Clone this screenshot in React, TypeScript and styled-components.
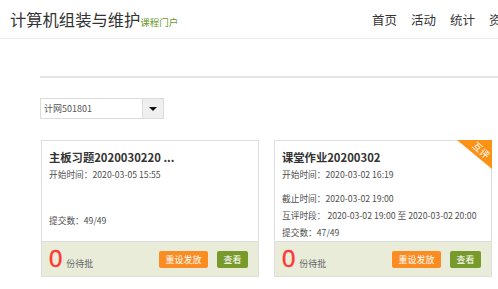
import React from 'react'
import styled, { createGlobalStyle } from 'styled-components'

const GlobalStyle = createGlobalStyle`
  html, body {
    margin: 0;
    padding: 0;
    background: #fff;
    overflow: hidden;
  }
  body {
    font-family: "Noto Sans CJK SC", "Liberation Sans", sans-serif;
    color: #333;
  }
`

const Page = styled.div`
  width: 620px;
`

const Header = styled.header`
  height: 38px;
  display: flex;
  align-items: center;
  padding-left: 10px;
  border-bottom: 1px solid #ececec;
`

const Brand = styled.div`
  flex: 0 0 362px;
  display: flex;
  align-items: baseline;
`

const Title = styled.h1`
  margin: 0;
  font-size: 16.3px;
  font-weight: 400;
  color: #333;
`

const Sub = styled.span`
  font-size: 9.5px;
  color: #6a9a1f;
`

const Nav = styled.nav`
  display: flex;
  gap: 14px;
  font-size: 12.5px;
  color: #333;
`

const Main = styled.main`
  padding: 37px 0 0 40px;
`

const Rule = styled.div`
  height: 2px;
  background: #e4e4e4;
`

const Select = styled.div`
  margin-top: 20px;
  width: 124px;
  height: 21px;
  box-sizing: border-box;
  border: 1px solid #dcdcdc;
  display: flex;
`

const SelectText = styled.div`
  flex: 1;
  font-size: 9px;
  line-height: 19px;
  padding-left: 3px;
  color: #555;
`

const SelectBtn = styled.div`
  width: 20px;
  border-left: 1px solid #dcdcdc;
  background: #efefef;
  display: flex;
  align-items: center;
  justify-content: center;
`

const Caret = styled.div`
  width: 0;
  height: 0;
  border-left: 4px solid transparent;
  border-right: 4px solid transparent;
  border-top: 4px solid #111;
`

const Cards = styled.div`
  margin-top: 21px;
  margin-left: 1px;
  display: grid;
  grid-template-columns: 218px 218px;
  gap: 15px;
`

const Card = styled.div`
  position: relative;
  border: 1px solid #dedede;
`

const Body = styled.div`
  height: 100px;
  box-sizing: border-box;
  padding: 8px 7px 0;
  background: #fff;
  overflow: hidden;
`

const CardTitle = styled.div`
  font-size: 11.3px;
  font-weight: 700;
  line-height: 17px;
  color: #333;
`

const Line = styled.div<{ $gap?: number }>`
  font-size: 8.7px;
  line-height: 17px;
  color: #4f4f4f;
  white-space: nowrap;
  margin-top: ${p => p.$gap || 0}px;
`

const Times = styled.div`
  min-height: 46px;
`

const Footer = styled.div`
  height: 35px;
  box-sizing: border-box;
  border-top: 1px solid #dedede;
  background: #e8ecd9;
  display: flex;
  align-items: center;
  padding: 0 10px 0 7px;
`

const Pending = styled.div`
  display: flex;
  align-items: baseline;
  gap: 4px;
`

const Count = styled.span`
  font-family: "Liberation Sans", sans-serif;
  font-size: 24px;
  line-height: 1;
  color: #ff3633;
  -webkit-text-stroke: 0.4px #ff3633;
`

const PendingLabel = styled.span`
  font-size: 9px;
  color: #666;
`

const Actions = styled.div`
  margin-left: auto;
  display: flex;
  gap: 9px;
`

const Button = styled.button<{ $tone: 'orange' | 'green' }>`
  height: 17px;
  padding: 0 6.5px;
  border: none;
  border-radius: 2px;
  font-family: inherit;
  font-size: 9px;
  color: #fff;
  background: ${p => (p.$tone === 'orange' ? '#fb8c22' : '#789a2b')};
`

const Ribbon = styled.div`
  position: absolute;
  top: -1px;
  right: -1px;
  width: 35px;
  height: 29px;
`

const RibbonShape = styled.div`
  position: absolute;
  inset: 0;
  background: #fb9216;
  clip-path: polygon(0 0, 100% 0, 100% 100%);
`

const RibbonText = styled.span`
  position: absolute;
  top: 4px;
  right: 1px;
  font-size: 9.5px;
  line-height: 12px;
  color: #fff;
  transform: rotate(42deg);
`

const App: React.FC = () => {
  const nav = ['首页', '活动', '统计', '资源', '通知']

  return (
    <Page>
      <GlobalStyle />
      <Header>
        <Brand>
          <Title>计算机组装与维护</Title>
          <Sub>课程门户</Sub>
        </Brand>
        <Nav>
          {nav.map(n => (
            <span key={n}>{n}</span>
          ))}
        </Nav>
      </Header>

      <Main>
        <Rule />
        <Select>
          <SelectText>计网501801</SelectText>
          <SelectBtn>
            <Caret />
          </SelectBtn>
        </Select>

        <Cards>
          <Card>
            <Body>
              <CardTitle>主板习题2020030220 ...</CardTitle>
              <Times>
                <Line>开始时间：2020-03-05 15:55</Line>
              </Times>
              <Line>提交数：49/49</Line>
            </Body>
            <Footer>
              <Pending>
                <Count>0</Count>
                <PendingLabel>份待批</PendingLabel>
              </Pending>
              <Actions>
                <Button $tone="orange">重设发放</Button>
                <Button $tone="green">查看</Button>
              </Actions>
            </Footer>
          </Card>

          <Card>
            <Ribbon>
              <RibbonShape />
              <RibbonText>互评</RibbonText>
            </Ribbon>
            <Body>
              <CardTitle>课堂作业20200302</CardTitle>
              <Times>
                <Line>开始时间：2020-03-02 16:19</Line>
                <Line $gap={7}>截止时间：2020-03-02 19:00</Line>
                <Line>互评时段： 2020-03-02 19:00 至 2020-03-02 20:00</Line>
              </Times>
              <Line>提交数：47/49</Line>
            </Body>
            <Footer>
              <Pending>
                <Count>0</Count>
                <PendingLabel>份待批</PendingLabel>
              </Pending>
              <Actions>
                <Button $tone="orange">重设发放</Button>
                <Button $tone="green">查看</Button>
              </Actions>
            </Footer>
          </Card>
        </Cards>
      </Main>
    </Page>
  )
}

export default App
